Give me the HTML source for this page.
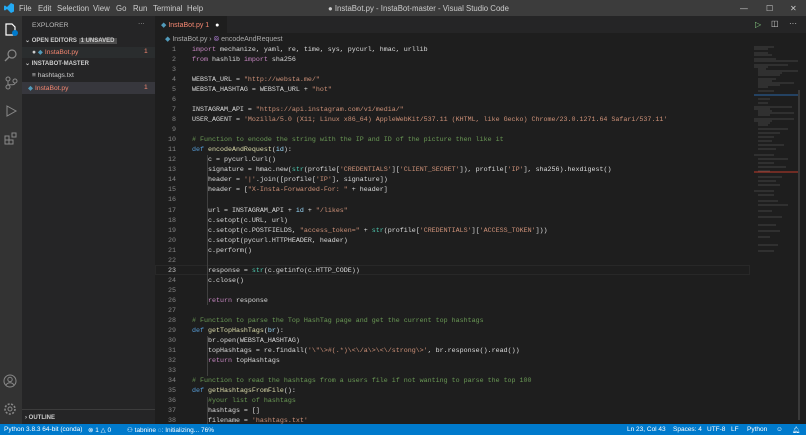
<!DOCTYPE html>
<html><head><meta charset="utf-8"><style>
*{margin:0;padding:0;box-sizing:border-box}
body{width:806px;height:435px;overflow:hidden;background:#1e1e1e;font-family:"Liberation Sans",sans-serif;position:relative;color:#ccc}
.abs{position:absolute}
#title{left:0;top:0;width:806px;height:16px;background:#3c3c3c;font-size:7.8px;color:#ccc}
#title span{position:absolute;top:3.5px}
#act{left:0;top:16px;width:22px;height:408px;background:#333}
#side{left:22px;top:16px;width:133px;height:408px;background:#252526;font-size:6.7px}
#side div{position:absolute;white-space:nowrap}
#tabs{left:155px;top:16px;width:651px;height:17px;background:#252526}
#tab{left:155px;top:16px;width:72px;height:17px;background:#1e1e1e;font-size:7px;color:#f48771}
#crumb{left:155px;top:33px;width:600px;height:12px;font-size:7px;color:#aaa}
#code{left:152px;top:45px;width:600px;font-family:"Liberation Mono",monospace;font-size:6.67px;line-height:10.03px;white-space:pre;color:#dcdcdc}
.ln{display:inline-block;width:24px;text-align:right;color:#858585;margin-right:16px}
.k{color:#c586c0}.d{color:#569cd6}.f{color:#dcdcaa}.s{color:#ce9178}.c{color:#6a9955}.v{color:#9cdcfe}.b{color:#4ec9b0}
#status{left:0;top:424px;width:806px;height:11px;background:#007acc;color:#fff;font-size:6.5px}
#status span{position:absolute;top:2px}
#mini{left:750px;top:45px;width:50px;height:379px}
</style></head><body>
<div id="title" class="abs">
<svg class="abs" style="left:4px;top:3px" width="10" height="10" viewBox="0 0 10 10"><path d="M7 0L3 4 1 2.5 0 3v4l1 .5 2-1.5 4 4 3-1.5V1.5z" fill="#23a9f2"/></svg>
<span style="left:19px">File</span><span style="left:38px">Edit</span><span style="left:57px">Selection</span><span style="left:93px">View</span><span style="left:116px">Go</span><span style="left:133px">Run</span><span style="left:153px">Terminal</span><span style="left:187px">Help</span>
<span style="left:328px">● InstaBot.py - InstaBot-master - Visual Studio Code</span>
<span style="left:740px">—</span><span style="left:766px">☐</span><span style="left:790px">✕</span>
</div>
<div id="act" class="abs">
<svg class="abs" style="left:4px;top:5px" width="14" height="16"><path d="M2 3h6l3 3v8H2z" fill="none" stroke="#fff" stroke-width="1.2"/><circle cx="11" cy="12" r="3" fill="#007acc"/></svg>
<svg class="abs" style="left:4px;top:32px" width="14" height="14"><circle cx="8" cy="6" r="4" fill="none" stroke="#888" stroke-width="1.2"/><path d="M5 9L1 13" stroke="#888" stroke-width="1.4"/></svg>
<svg class="abs" style="left:4px;top:60px" width="14" height="14"><circle cx="4" cy="3" r="2" fill="none" stroke="#888"/><circle cx="4" cy="11" r="2" fill="none" stroke="#888"/><circle cx="11" cy="5" r="2" fill="none" stroke="#888"/><path d="M4 5v4M11 7c0 3-7 1-7 2" fill="none" stroke="#888"/></svg>
<svg class="abs" style="left:4px;top:88px" width="14" height="14"><path d="M3 2l9 5-9 5z" fill="none" stroke="#888"/></svg>
<svg class="abs" style="left:4px;top:116px" width="14" height="14"><path d="M1 4h4v4H1zM5 8h4v4H5zM1 8h4v4H1zM8 1h4v4H8z" fill="none" stroke="#888"/></svg>
<svg class="abs" style="left:3px;top:358px" width="14" height="14"><circle cx="7" cy="7" r="6" fill="none" stroke="#888"/><circle cx="7" cy="5.5" r="2.2" fill="none" stroke="#888"/><path d="M3 11c2-3 6-3 8 0" fill="none" stroke="#888"/></svg>
<svg class="abs" style="left:3px;top:386px" width="14" height="14"><circle cx="7" cy="7" r="2" fill="none" stroke="#888"/><circle cx="7" cy="7" r="5" fill="none" stroke="#888" stroke-dasharray="2 1.5" stroke-width="1.6"/></svg>
</div>
<div id="side" class="abs">
<div style="left:10px;top:6px;color:#bbb">EXPLORER</div><div style="left:116px;top:4px">···</div>
<div style="left:3px;top:21px;font-weight:bold;font-size:6px">⌄ OPEN EDITORS <span style="background:#4d4d4d;padding:0 2px;font-weight:bold">1 UNSAVED</span></div>
<div style="left:0;top:31px;width:133px;height:11px;background:#2a2d2e"></div>
<div style="left:10px;top:32px">● <span style="color:#519aba">◆</span> <span style="color:#f48771">InstaBot.py</span></div><div style="left:122px;top:32px;color:#f48771">1</div>
<div style="left:3px;top:44px;font-weight:bold;font-size:6px">⌄ INSTABOT-MASTER</div>
<div style="left:10px;top:56px">≡ hashtags.txt</div>
<div style="left:0;top:66px;width:133px;height:12px;background:#37373d"></div>
<div style="left:6px;top:68px"><span style="color:#519aba">◆</span> <span style="color:#f48771">InstaBot.py</span></div><div style="left:122px;top:68px;color:#f48771">1</div>
<div style="left:0;top:393px;width:133px;height:1px;background:#3c3c3c"></div>
<div style="left:3px;top:399px;font-weight:bold;font-size:6px">› OUTLINE</div>
</div>
<div id="tabs" class="abs"></div>
<div id="tab" class="abs"><span class="abs" style="left:6px;top:5px"><span style="color:#519aba">◆</span> InstaBot.py 1 <span style="color:#fff;margin-left:4px">●</span></span></div>
<div class="abs" style="left:755px;top:20px;font-size:8px;color:#89d185">▷</div>
<div class="abs" style="left:771px;top:19px;font-size:8px;color:#ccc">◫</div>
<div class="abs" style="left:789px;top:19px;font-size:8px;color:#ccc">···</div>
<div id="crumb" class="abs"><span class="abs" style="left:10px;top:2px"><span style="color:#519aba">◆</span> InstaBot.py › <span style="color:#b180d7">⦾</span> encodeAndRequest</span></div>
<div class="abs" style="left:155px;top:265px;width:595px;height:10px;border:1px solid #282828"></div>
<div class="abs" style="left:207px;top:155px;width:1px;height:150px;background:#404040"></div>
<div class="abs" style="left:207px;top:336px;width:1px;height:40px;background:#404040"></div>
<div class="abs" style="left:207px;top:397px;width:1px;height:30px;background:#404040"></div>
<div id="code" class="abs"><span class="ln">1</span><span class="k">import</span> mechanize, yaml, re, time, sys, pycurl, hmac, urllib
<span class="ln">2</span><span class="k">from</span> hashlib <span class="k">import</span> sha256
<span class="ln">3</span>
<span class="ln">4</span>WEBSTA_URL = <span class="s">"http://websta.me/"</span>
<span class="ln">5</span>WEBSTA_HASHTAG = WEBSTA_URL + <span class="s">"hot"</span>
<span class="ln">6</span>
<span class="ln">7</span>INSTAGRAM_API = <span class="s">"https://api.instagram.com/v1/media/"</span>
<span class="ln">8</span>USER_AGENT = <span class="s">'Mozilla/5.0 (X11; Linux x86_64) AppleWebKit/537.11 (KHTML, like Gecko) Chrome/23.0.1271.64 Safari/537.11'</span>
<span class="ln">9</span>
<span class="ln">10</span><span class="c"># Function to encode the string with the IP and ID of the picture then like it</span>
<span class="ln">11</span><span class="d">def</span> <span class="f">encodeAndRequest</span>(<span class="v">id</span>):
<span class="ln">12</span>    c = pycurl.Curl()
<span class="ln">13</span>    signature = hmac.new(<span class="b">str</span>(profile[<span class="s">'CREDENTIALS'</span>][<span class="s">'CLIENT_SECRET'</span>]), profile[<span class="s">'IP'</span>], sha256).hexdigest()
<span class="ln">14</span>    header = <span class="s">'|'</span>.join([profile[<span class="s">'IP'</span>], signature])
<span class="ln">15</span>    header = [<span class="s">"X-Insta-Forwarded-For: "</span> + header]
<span class="ln">16</span>
<span class="ln">17</span>    url = INSTAGRAM_API + <span class="v">id</span> + <span class="s">"/likes"</span>
<span class="ln">18</span>    c.setopt(c.URL, url)
<span class="ln">19</span>    c.setopt(c.POSTFIELDS, <span class="s">"access_token="</span> + <span class="b">str</span>(profile[<span class="s">'CREDENTIALS'</span>][<span class="s">'ACCESS_TOKEN'</span>]))
<span class="ln">20</span>    c.setopt(pycurl.HTTPHEADER, header)
<span class="ln">21</span>    c.perform()
<span class="ln">22</span>
<span class="ln" style="color:#c6c6c6">23</span>    response = <span class="b">str</span>(c.getinfo(c.HTTP_CODE))
<span class="ln">24</span>    c.close()
<span class="ln">25</span>
<span class="ln">26</span>    <span class="k">return</span> response
<span class="ln">27</span>
<span class="ln">28</span><span class="c"># Function to parse the Top HashTag page and get the current top hashtags</span>
<span class="ln">29</span><span class="d">def</span> <span class="f">getTopHashTags</span>(<span class="v">br</span>):
<span class="ln">30</span>    br.open(WEBSTA_HASHTAG)
<span class="ln">31</span>    topHashtags = re.findall(<span class="s">'\"\&gt;#(.*)\&lt;\/a\&gt;\&lt;\/strong\&gt;'</span>, br.response().read())
<span class="ln">32</span>    <span class="k">return</span> topHashtags
<span class="ln">33</span>
<span class="ln">34</span><span class="c"># Function to read the hashtags from a users file if not wanting to parse the top 100</span>
<span class="ln">35</span><span class="d">def</span> <span class="f">getHashtagsFromFile</span>():
<span class="ln">36</span>    <span class="c">#your list of hashtags</span>
<span class="ln">37</span>    hashtags = []
<span class="ln">38</span>    filename = <span class="s">'hashtags.txt'</span>
</div>
<svg id="mini" class="abs" viewBox="0 0 50 379">
<g stroke-width="0.8" opacity=".45">
<path d="M4 2h20M4 4h14M4 8h14M4 10h18M4 14h22M4 16h44M4 20h34M4 22h14M8 24h8M8 26h40M8 28h24M8 30h22M8 34h18M8 36h14M8 38h36M8 40h22M8 42h10" stroke="#888"/>
<path d="M8 46h16M8 54h12M8 58h10M4 62h38M4 64h16M8 66h14M8 68h36M8 70h12M4 74h40M4 76h18M8 78h12M8 80h10M8 84h30M8 88h22M8 92h16M8 96h14M8 100h26M8 104h18M4 110h20M8 114h30M8 118h16M8 122h28M8 126h12M8 132h24M8 136h18M8 140h22M4 146h20M8 150h16M8 156h20M8 160h30M8 166h14M8 172h24M8 180h18M8 186h22M8 192h12M8 200h20M8 206h16" stroke="#888"/>
</g>
<path d="M4 50h45" stroke="#264f78" stroke-width="1.5"/>
<path d="M4 127h45" stroke="#c0392b" stroke-width="1"/>
<rect x="48" y="45" width="2" height="330" fill="#3a3a3a"/>
</svg>
<div id="status" class="abs">
<span style="left:4px">Python 3.8.3 64-bit (conda)</span><span style="left:88px">⊗ 1 △ 0</span><span style="left:127px">⚇ tabnine ◌: Initializing... 76%</span>
<span style="left:627px">Ln 23, Col 43</span><span style="left:673px">Spaces: 4</span><span style="left:707px">UTF-8</span><span style="left:731px">LF</span><span style="left:747px">Python</span><span style="left:776px">☺</span><span style="left:792px">🔔︎</span>
</div>
</body></html>
